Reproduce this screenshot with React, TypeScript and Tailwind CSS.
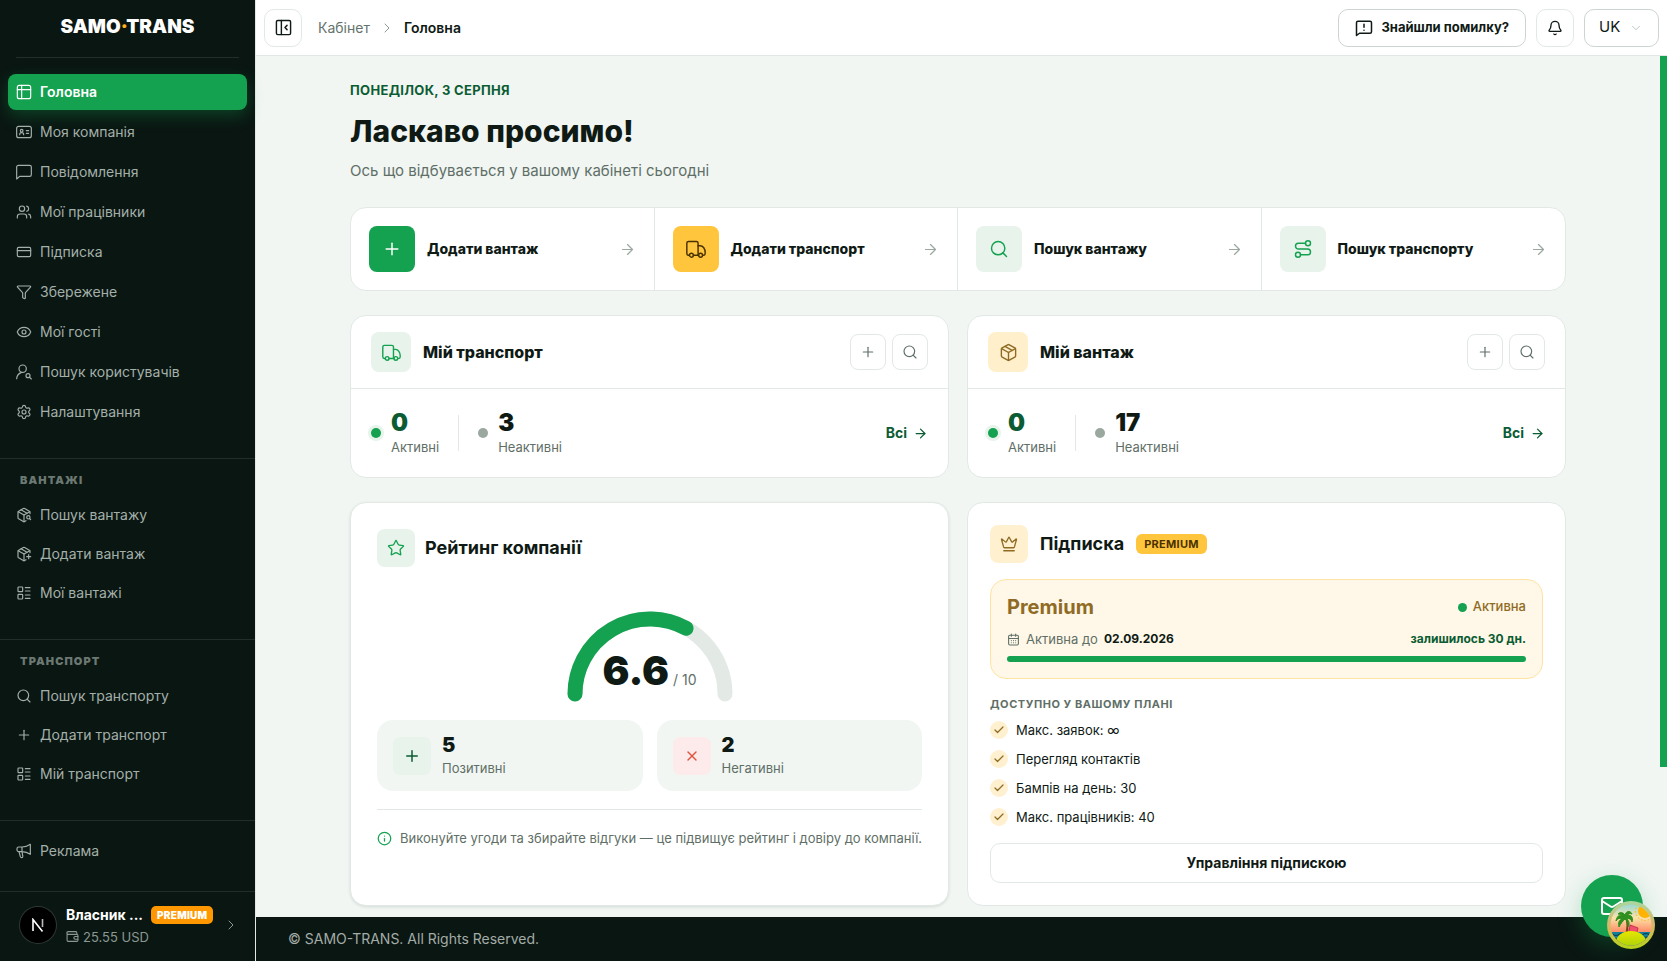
import { ReactNode, useState } from 'react';
import {
  ArrowRight,
  Bell,
  CalendarDays,
  Check,
  ChevronDown,
  ChevronRight,
  CreditCard,
  Crown,
  Eye,
  Funnel,
  Info,
  LayoutList,
  Mail,
  Package,
  PackagePlus,
  PackageSearch,
  Plus,
  Route,
  Search,
  Settings,
  Star,
  Users,
  X,
} from 'lucide-react';

type IconProps = { size?: number; strokeWidth?: number; className?: string };

function Svg({ size = 16, strokeWidth = 2, className, children }: IconProps & { children: ReactNode }) {
  return (
    <svg
      width={size}
      height={size}
      viewBox="0 0 24 24"
      fill="none"
      stroke="currentColor"
      strokeWidth={strokeWidth}
      strokeLinecap="round"
      strokeLinejoin="round"
      className={className}
      aria-hidden="true"
    >
      {children}
    </svg>
  );
}

const DashboardIcon = (props: IconProps) => (
  <Svg {...props}>
    <rect x="2" y="2" width="20" height="20" rx="3" />
    <path d="M2 8.5h20M8.5 2v20" />
  </Svg>
);

const CompanyIcon = (props: IconProps) => (
  <Svg {...props}>
    <rect x="1" y="3.5" width="22" height="17" rx="3" />
    <circle cx="8.5" cy="10" r="2" />
    <path d="M5.5 16c0-2 1.3-3 3-3s3 1 3 3M15.5 10h3.5M15.5 14h3.5" />
  </Svg>
);

const MessageIcon = (props: IconProps) => (
  <Svg {...props}>
    <path d="M23 16a2.5 2.5 0 0 1-2.5 2.5H5.5L1 22.5V4.5A2.5 2.5 0 0 1 3.5 2h17A2.5 2.5 0 0 1 23 4.5z" />
  </Svg>
);

const ReportIcon = (props: IconProps) => (
  <Svg {...props}>
    <path d="M22 17a2 2 0 0 1-2 2H6l-4 3V5a2 2 0 0 1 2-2h16a2 2 0 0 1 2 2zM12 7v4M12 15h.01" />
  </Svg>
);

const UserSearchIcon = (props: IconProps) => (
  <Svg {...props}>
    <circle cx="10" cy="7" r="5.5" />
    <path d="M1 22c.3-4.5 3-8 7.5-9.5" />
    <circle cx="18" cy="17.5" r="3" />
    <path d="m23 22.5-2.5-2.5" />
  </Svg>
);

const MegaphoneIcon = (props: IconProps) => (
  <Svg {...props}>
    <path d="M9 6H4a2.5 2.5 0 0 0-2.5 2.5v2A2.5 2.5 0 0 0 4 13h5M9 6v7M9 6c5 0 9-1.5 12.5-4v15C18 14.5 14 13 9 13zM4.5 13l2 7.5c.3 1 1 1.5 2 1.5 1.3 0 2-1 1.7-2.2L9 13" />
  </Svg>
);

const WalletIcon = (props: IconProps) => (
  <Svg {...props}>
    <path d="M20 8V5a2 2 0 0 0-2-2H4a2 2 0 0 0 0 5h16a2 2 0 0 1 2 2v9a2 2 0 0 1-2 2H4a2 2 0 0 1-2-2V5" />
    <path d="M22 12h-5a2.5 2.5 0 0 0 0 5h5" />
  </Svg>
);

const CollapseIcon = (props: IconProps) => (
  <Svg {...props}>
    <rect x="2" y="2" width="20" height="20" rx="2" />
    <path d="M9 2v20M17 9l-3 3 3 3" />
  </Svg>
);

const TruckIcon = (props: IconProps) => (
  <Svg {...props}>
    <path d="M4 19.5H3a2 2 0 0 1-2-2V5a2 2 0 0 1 2-2h9.5a2 2 0 0 1 2 2v14.5M9 19.5h6" />
    <path d="M14.5 8H17c3.5 0 6 4 6 8v1.5a2 2 0 0 1-2 2" />
    <circle cx="6.5" cy="19.5" r="2.3" />
    <circle cx="17.5" cy="19.5" r="2.3" />
  </Svg>
);

const mainNav = [
  { label: 'Головна', icon: DashboardIcon, active: true },
  { label: 'Моя компанія', icon: CompanyIcon },
  { label: 'Повідомлення', icon: MessageIcon },
  { label: 'Мої працівники', icon: Users },
  { label: 'Підписка', icon: CreditCard },
  { label: 'Збережене', icon: Funnel },
  { label: 'Мої гості', icon: Eye },
  { label: 'Пошук користувачів', icon: UserSearchIcon },
  { label: 'Налаштування', icon: Settings },
];

const navGroups = [
  {
    title: 'Вантажі',
    items: [
      { label: 'Пошук вантажу', icon: PackageSearch },
      { label: 'Додати вантаж', icon: PackagePlus },
      { label: 'Мої вантажі', icon: LayoutList },
    ],
  },
  {
    title: 'Транспорт',
    items: [
      { label: 'Пошук транспорту', icon: Search },
      { label: 'Додати транспорт', icon: Plus },
      { label: 'Мій транспорт', icon: LayoutList },
    ],
  },
];

const quickActions = [
  { label: 'Додати вантаж', icon: Plus, tone: 'bg-[#14a150] text-white' },
  { label: 'Додати транспорт', icon: TruckIcon, tone: 'bg-[#ffc53d] text-[#4a3200]' },
  { label: 'Пошук вантажу', icon: Search, tone: 'bg-[#e7f3eb] text-[#14a150]' },
  { label: 'Пошук транспорту', icon: Route, tone: 'bg-[#e7f3eb] text-[#14a150]' },
];

const planFeatures = ['Макс. заявок: ∞', 'Перегляд контактів', 'Бампів на день: 30', 'Макс. працівників: 40'];

function NavItem({ label, icon: Icon, active }: { label: string; icon: any; active?: boolean }) {
  return (
    <a
      href="#"
      className={
        active
          ? 'flex h-9 items-center gap-2 rounded-lg bg-[#14a150] px-2 text-sm font-semibold text-white shadow-[0_6px_16px_rgba(20,161,80,0.3)]'
          : 'flex h-9 items-center gap-2 rounded-lg px-2 text-sm text-[#a3b0a9] hover:bg-white/5'
      }
    >
      <Icon size={16} strokeWidth={1.75} />
      {label}
    </a>
  );
}

function Sidebar() {
  return (
    <aside className="flex w-64 shrink-0 flex-col border-r border-[#e2e9e5] bg-[#0a1612]">
      <div className="mx-4 flex h-[58px] items-center justify-center border-b border-white/10 pb-[2px]">
        <a href="#" className="text-[19px] font-black text-white">
          SAMO<span className="text-[#ffb31a]">·</span>TRANS
        </a>
      </div>

      <nav className="flex flex-1 flex-col">
        <div className="flex flex-col gap-1 px-2 pt-4 pb-7">
          {mainNav.map((item) => (
            <NavItem key={item.label} {...item} />
          ))}
        </div>
        {navGroups.map((group) => (
          <div key={group.title} className="border-t border-white/10 px-2 pt-3 pb-7">
            <h3 className="mb-2 px-3 text-[11px] leading-[18px] font-black tracking-widest text-[#6c7872] uppercase">
              {group.title}
            </h3>
            <div className="flex flex-col gap-[3px]">
              {group.items.map((item) => (
                <NavItem key={item.label} {...item} />
              ))}
            </div>
          </div>
        ))}
        <div className="border-t border-white/10 px-2 py-3">
          <NavItem label="Реклама" icon={MegaphoneIcon} />
        </div>
      </nav>

      <button type="button" className="flex h-[70px] items-center border-t border-white/10 pr-4 pb-1 pl-5 text-left">
        <span className="flex size-9 shrink-0 items-center justify-center rounded-full bg-black ring-1 ring-white/15">
          <svg width="14" height="14" viewBox="0 0 14 14" fill="none" aria-hidden="true">
            <path d="M2 13V1.5L11.5 13.5" stroke="white" strokeWidth="1.6" />
            <path d="M11.5 1v8" stroke="#bbb" strokeWidth="1.6" />
          </svg>
        </span>
        <span className="ml-[10px] flex flex-1 flex-col gap-1">
          <span className="flex items-center gap-2">
            <span className="min-w-[76px] text-sm font-bold whitespace-nowrap text-white">Власник ...</span>
            <span className="rounded-[5px] bg-[#ff9800] px-[6px] text-[10px] leading-[18px] font-black tracking-wide text-white">
              PREMIUM
            </span>
          </span>
          <span className="flex items-center gap-1 text-[13px] leading-4 text-[#8b9891]">
            <WalletIcon size={13} />
            25.55 USD
          </span>
        </span>
        <ChevronRight size={16} strokeWidth={1.5} className="text-[#8b9891]" />
      </button>
    </aside>
  );
}

function TopBar() {
  const [lang, setLang] = useState('UK');

  return (
    <header className="flex h-14 shrink-0 items-center border-b border-[#e2e9e5] bg-white px-2">
      <button
        type="button"
        aria-label="Згорнути меню"
        className="flex size-[38px] items-center justify-center rounded-[10px] border border-[#e2e9e5] text-[#0f1a15]"
      >
        <CollapseIcon size={17} />
      </button>
      <nav className="ml-4 flex items-center gap-[9px] text-sm">
        <a href="#" className="text-[#64736b]">Кабінет</a>
        <ChevronRight size={16} strokeWidth={1.5} className="text-[#8b9891]" />
        <span className="font-semibold text-[#0f1a15]">Головна</span>
      </nav>
      <div className="ml-auto flex items-center gap-[10px]">
        <button
          type="button"
          className="flex h-[38px] items-center gap-2 rounded-[10px] border border-[#cdd5d1] px-4 text-[13px] font-bold text-[#0f1a15]"
        >
          <ReportIcon size={18} />
          Знайшли помилку?
        </button>
        <button
          type="button"
          aria-label="Сповіщення"
          className="flex size-[38px] items-center justify-center rounded-[10px] border border-[#e2e9e5] text-[#0f1a15]"
        >
          <Bell size={16} />
        </button>
        <div className="relative">
          <select
            aria-label="Мова"
            value={lang}
            onChange={(e) => setLang(e.target.value)}
            className="h-[38px] w-[75px] appearance-none rounded-[10px] border border-[#cdd5d1] bg-white px-[14px] text-[15px] text-[#0f1a15]"
          >
            <option>UK</option>
            <option>EN</option>
          </select>
          <ChevronDown
            size={14}
            strokeWidth={1.5}
            className="pointer-events-none absolute top-3 right-4 text-[#b5beb9]"
          />
        </div>
      </div>
    </header>
  );
}

function StatCard({ title, icon: Icon, tone, active, inactive }: {
  title: string;
  icon: any;
  tone: string;
  active: number;
  inactive: number;
}) {
  return (
    <section className="rounded-2xl border border-[#e2e9e5] bg-white">
      <div className="flex items-center border-b border-[#e2e9e5] px-5 py-4">
        <span className={`flex size-10 items-center justify-center rounded-lg ${tone}`}>
          <Icon size={19} strokeWidth={1.75} />
        </span>
        <h2 className="ml-3 text-base font-extrabold">{title}</h2>
        <div className="ml-auto flex gap-[6px] text-[#5f6f67]">
          <button
            type="button"
            aria-label="Додати"
            className="flex size-9 items-center justify-center rounded-lg border border-[#e2e9e5]"
          >
            <Plus size={16} strokeWidth={1.75} />
          </button>
          <button
            type="button"
            aria-label="Пошук"
            className="flex size-9 items-center justify-center rounded-lg border border-[#e2e9e5]"
          >
            <Search size={16} strokeWidth={1.75} />
          </button>
        </div>
      </div>
      <div className="flex items-center px-5 py-5">
        <span className="size-[10px] rounded-full bg-[#14a150] ring-3 ring-[#e7f3eb]" />
        <div className="ml-[10px]">
          <div className="text-2xl leading-7 font-black text-[#0b5c33]">{active}</div>
          <div className="text-[13px] leading-5 text-[#5f6f67]">Активні</div>
        </div>
        <span className="mx-[19px] h-9 w-px bg-[#e2e9e5]" />
        <span className="size-[10px] rounded-full bg-[#9aa89f]" />
        <div className="ml-[10px]">
          <div className="text-2xl leading-7 font-black">{inactive}</div>
          <div className="text-[13px] leading-5 text-[#5f6f67]">Неактивні</div>
        </div>
        <a href="#" className="ml-auto flex items-center gap-[6px] text-sm font-bold text-[#0b5c33]">
          Всі
          <ArrowRight size={15} />
        </a>
      </div>
    </section>
  );
}

function RatingCard() {
  return (
    <section className="rounded-2xl border border-[#e2e9e5] bg-white p-[26px] shadow-[0_1px_3px_rgba(10,40,25,0.12)]">
      <div className="flex items-center gap-[10px]">
        <span className="flex size-[38px] items-center justify-center rounded-lg bg-[#e7f3eb] text-[#14a150]">
          <Star size={18} strokeWidth={1.75} />
        </span>
        <h2 className="text-lg font-bold">Рейтинг компанії</h2>
      </div>

      <div className="relative mx-auto mt-11 w-[166px]">
        <svg width="166" height="92" viewBox="0 0 166 92" fill="none" strokeWidth="15" strokeLinecap="round" aria-hidden="true">
          <path d="M8 83a75 75 0 0 1 150 0" stroke="#e3e9e5" />
          <path d="M8 83a75 75 0 0 1 111.1-65.7" stroke="#14a150" />
        </svg>
        <div className="absolute inset-x-0 bottom-3 flex items-baseline justify-center gap-1">
          <span className="text-[40px] leading-none font-black">6.6</span>
          <span className="text-sm text-[#5f6f67]">/ 10</span>
        </div>
      </div>

      <div className="mt-[17px] grid grid-cols-2 gap-[14px]">
        <div className="flex items-center gap-[11px] rounded-2xl bg-[#f1f6f3] px-4 py-[13px]">
          <span className="flex size-[38px] items-center justify-center rounded-lg bg-[#e7f3eb] text-[#0b5c33]">
            <Plus size={18} />
          </span>
          <div>
            <div className="text-xl leading-[25px] font-black">5</div>
            <div className="text-[13px] leading-5 text-[#5f6f67]">Позитивні</div>
          </div>
        </div>
        <div className="flex items-center gap-[11px] rounded-2xl bg-[#f1f6f3] px-4 py-[13px]">
          <span className="flex size-[38px] items-center justify-center rounded-lg bg-[#fdeaea] text-[#e0533d]">
            <X size={16} />
          </span>
          <div>
            <div className="text-xl leading-[25px] font-black">2</div>
            <div className="text-[13px] leading-5 text-[#5f6f67]">Негативні</div>
          </div>
        </div>
      </div>

      <p className="mt-[18px] flex items-center gap-2 border-t border-[#e2e9e5] pt-[18px] text-[13px] leading-5 text-[#5f6f67] xl:whitespace-nowrap">
        <Info size={15} className="shrink-0 text-[#14a150]" />
        Виконуйте угоди та збирайте відгуки — це підвищує рейтинг і довіру до компанії.
      </p>
    </section>
  );
}

function SubscriptionCard() {
  return (
    <section className="rounded-2xl border border-[#e2e9e5] bg-white p-[22px]">
      <div className="flex items-center">
        <span className="flex size-[38px] items-center justify-center rounded-lg bg-[#fff1cf] text-[#8f6b25]">
          <Crown size={18} strokeWidth={1.75} />
        </span>
        <h2 className="ml-3 text-lg font-bold">Підписка</h2>
        <span className="ml-3 rounded-md bg-[#ffc53d] px-2 text-[11px] leading-5 font-bold tracking-wide text-[#4a3200]">
          PREMIUM
        </span>
      </div>

      <div className="mt-4 rounded-2xl border border-[#ffe3a3] bg-[#fff8e8] px-4 pt-[15px] pb-4">
        <div className="flex items-center justify-between">
          <span className="text-xl leading-6 font-bold text-[#8f6b25]">Premium</span>
          <span className="flex items-center gap-[6px] text-[13px] font-medium text-[#8f6b25]">
            <span className="size-[9px] rounded-full bg-[#14a150]" />
            Активна
          </span>
        </div>
        <div className="mt-[10px] flex items-center text-[13px] leading-5">
          <CalendarDays size={13} className="text-[#5f6f67]" />
          <span className="ml-[6px] text-[#5f6f67]">Активна до</span>
          <span className="ml-[6px] text-xs font-bold">02.09.2026</span>
          <span className="ml-auto text-xs font-bold text-[#0b5c33]">залишилось 30 дн.</span>
        </div>
        <div className="mt-[7px] h-[6px] rounded-full bg-[#14a150]" />
      </div>

      <h3 className="mt-4 text-[11px] leading-[18px] font-bold tracking-wider text-[#5f6f67] uppercase">
        Доступно у вашому плані
      </h3>
      <ul className="mt-[7px] flex flex-col gap-[9px]">
        {planFeatures.map((feature) => (
          <li key={feature} className="flex items-center gap-2 text-[13px] leading-5">
            <span className="flex size-[18px] items-center justify-center rounded-full bg-[#fff1cf] text-[#8f6b25]">
              <Check size={12} strokeWidth={2.5} />
            </span>
            {feature}
          </li>
        ))}
      </ul>
      <button type="button" className="mt-4 h-10 w-full rounded-[10px] border border-[#e2e9e5] text-sm font-bold">
        Управління підпискою
      </button>
    </section>
  );
}

function IslandBadge() {
  return (
    <svg width="48" height="48" viewBox="0 0 48 48" aria-hidden="true">
      <defs>
        <linearGradient id="sky" x1="0" y1="0" x2="0" y2="1">
          <stop offset="0" stopColor="#7fd6e0" />
          <stop offset="0.35" stopColor="#fbe3a8" />
          <stop offset="0.65" stopColor="#ff8a66" />
        </linearGradient>
        <linearGradient id="ring" x1="0" y1="0" x2="0" y2="1">
          <stop offset="0" stopColor="#a9d8a0" />
          <stop offset="0.5" stopColor="#d9b56a" />
          <stop offset="1" stopColor="#b6d316" />
        </linearGradient>
        <linearGradient id="sand" x1="0" y1="0" x2="0" y2="1">
          <stop offset="0" stopColor="#e8e600" />
          <stop offset="1" stopColor="#93c90e" />
        </linearGradient>
        <clipPath id="disc">
          <circle cx="24" cy="24" r="20.5" />
        </clipPath>
      </defs>
      <circle cx="24" cy="24" r="24" fill="url(#ring)" />
      <g clipPath="url(#disc)">
        <path d="M0 0h48v48H0z" fill="url(#sky)" />
        <circle cx="38" cy="10" r="9.5" fill="none" stroke="#ffb300" strokeWidth="1" strokeDasharray="1.5 2" />
        <circle cx="38" cy="10" r="7" fill="#ffb300" />
        <path d="M0 31h48v17H0z" fill="#0f7f9c" />
        <path d="M0 33.5q3-2 6 0t6 0 6 0 6 0 6 0 6 0 6 0 6 0M0 37q3-2 6 0t6 0 6 0 6 0 6 0 6 0 6 0 6 0" fill="none" stroke="#0a3f57" strokeWidth="1.2" />
        <path d="M18 16c2 6 2 11 0 17h3c1-6 0-12-1.5-17z" fill="#7a3b16" />
        <path d="m23 24 8 3-1 4h-8z" fill="#f0506e" stroke="#c2334f" />
        <path d="M18 17c-4-5-8-3-9 3 2-3 4-3 6-2-3 1-4 4-3 8 2-4 4-6 6-8 2 2 3 4 3 8 2-3 1-6-1-8 2-1 4 0 5 3 2-5-2-8-5-6 1-2 3-3 5-2-2-4-6-3-7 1-2-3-5-3-7-1 3 0 5 2 7 4z" fill="#2f8f1f" stroke="#2f8f1f" />
        <ellipse cx="24" cy="41" rx="15" ry="11" fill="url(#sand)" />
      </g>
    </svg>
  );
}

export default function App() {
  return (
    <div className="flex h-screen overflow-hidden bg-[#f1f6f3] font-['Inter',sans-serif] text-[#0f1a15]">
      <Sidebar />
      <div className="flex min-w-0 flex-1 flex-col">
        <TopBar />
        <main className="relative min-h-0 flex-1 overflow-hidden pr-[7px]">
          <div className="mx-auto max-w-7xl px-8 pt-6 pb-3">
            <p className="text-[13px] leading-5 font-bold tracking-wide text-[#0b5c33] uppercase">
              Понеділок, 3 серпня
            </p>
            <h1 className="mt-[11px] text-[30px] leading-10 font-extrabold">Ласкаво просимо!</h1>
            <p className="mt-2 text-[15px] leading-6 text-[#5f6f67]">Ось що відбувається у вашому кабінеті сьогодні</p>

            <div className="mt-6 grid grid-cols-4 divide-x divide-[#e2e9e5] overflow-hidden rounded-2xl border border-[#e2e9e5] bg-white">
              {quickActions.map(({ label, icon: Icon, tone }) => (
                <a key={label} href="#" className="flex items-center p-[18px] text-sm font-extrabold">
                  <span className={`flex size-[46px] items-center justify-center rounded-lg ${tone}`}>
                    <Icon size={20} strokeWidth={1.75} />
                  </span>
                  <span className="ml-3">{label}</span>
                  <ArrowRight size={17} strokeWidth={1.75} className="ml-auto text-[#9aa89f]" />
                </a>
              ))}
            </div>

            <div className="mt-6 grid grid-cols-2 gap-x-[18px] gap-y-6">
              <StatCard title="Мій транспорт" icon={TruckIcon} tone="bg-[#e7f3eb] text-[#14a150]" active={0} inactive={3} />
              <StatCard title="Мій вантаж" icon={Package} tone="bg-[#ffefca] text-[#8f6b25]" active={0} inactive={17} />
              <RatingCard />
              <SubscriptionCard />
            </div>
          </div>
          {/* scroll progress */}
          <div className="absolute top-0 right-0 h-[711px] w-[7px] bg-[#14a150]" />
        </main>
        <footer className="flex h-11 shrink-0 items-center bg-[#0a1612] px-8 text-sm text-[#a3aca7]">
          © SAMO-TRANS. All Rights Reserved.
        </footer>
      </div>

      <button
        type="button"
        aria-label="Написати нам"
        className="fixed right-6 bottom-6 flex size-[62px] items-center justify-center rounded-full bg-[#14a150] text-white shadow-[0_8px_24px_rgba(20,161,80,0.3)]"
      >
        <Mail size={24} />
      </button>
      <button type="button" aria-label="Інструменти" className="fixed right-3 bottom-3 rounded-full">
        <IslandBadge />
      </button>
    </div>
  );
}
